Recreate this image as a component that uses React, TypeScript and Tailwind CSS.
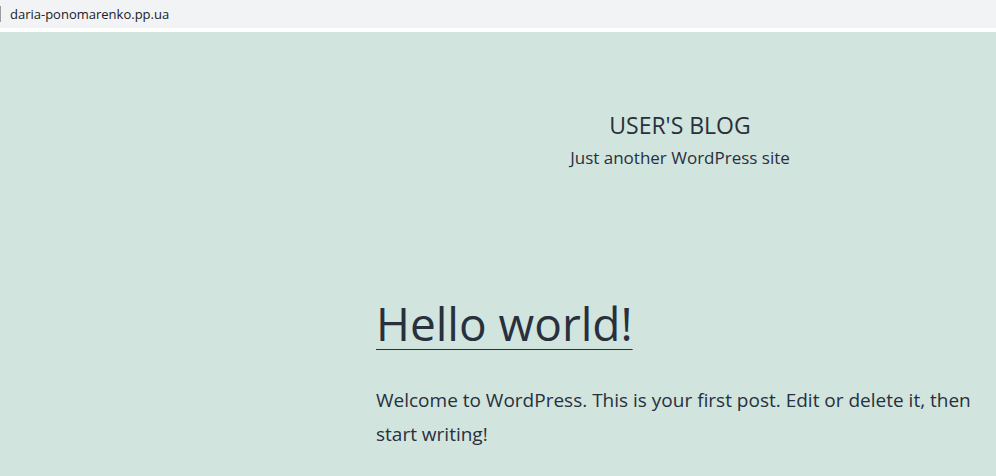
export default function App() {
  return (
    <div className="flex min-h-screen flex-col bg-[#d1e4dd] font-['Open_Sans','Noto_Sans',sans-serif] text-[#28303d]">
      <div className="border-b-4 border-white bg-[#f1f3f4]">
        <div className="flex h-7 items-center">
          <span className="h-4 w-px bg-[#9a9c9f]" />
          <input
            aria-label="Address"
            defaultValue="daria-ponomarenko.pp.ua"
            className="ml-2 w-full bg-transparent pt-px pl-px text-[13px] text-[#202124] outline-none"
          />
        </div>
      </div>
      <header className="ml-91 flex flex-col items-center pt-20 text-center">
        <p className="text-[23px] leading-[26px] uppercase">User's Blog</p>
        <p className="text-[17px] leading-10">Just another WordPress site</p>
      </header>
      <main className="ml-94 pt-[115px]">
        <h1 className="text-[46px] leading-[60px] font-normal">
          <a href="#hello" className="underline decoration-1 underline-offset-8">Hello world!</a>
        </h1>
        <p className="mt-[30px] text-[19px] leading-[34px]">
          Welcome to WordPress. This is your first post. Edit or delete it, then start writing!
        </p>
      </main>
    </div>
  );
}
